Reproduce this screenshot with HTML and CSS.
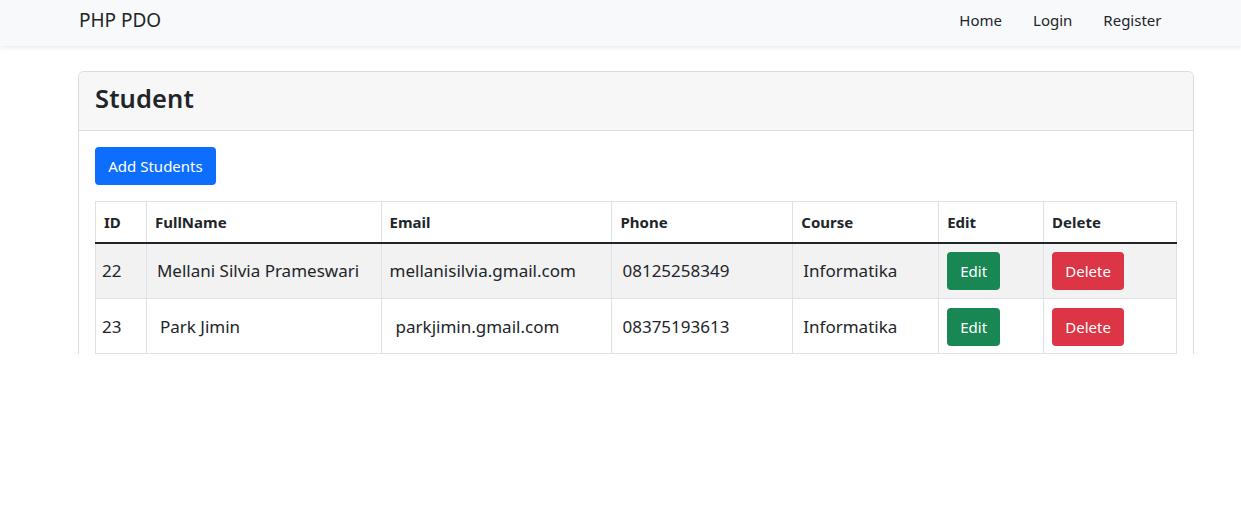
FILE: index.html
```html
<!DOCTYPE html>
<html lang="en">
<head>
<meta charset="utf-8">
<title>PHP PDO</title>
<link rel="stylesheet" href="styles.css">
</head>
<body>
<nav class="navbar">
  <a class="brand" href="#">PHP PDO</a>
  <ul class="nav">
    <li><a href="#">Home</a></li>
    <li><a href="#">Login</a></li>
    <li><a href="#">Register</a></li>
  </ul>
</nav>
<main class="container">
  <section class="card">
    <header class="card-header"><h3>Student</h3></header>
    <div class="card-body">
      <a class="btn btn-primary add" href="#">Add Students</a>
      <table class="table">
        <thead>
          <tr>
            <th class="c-id">ID</th>
            <th class="c-name">FullName</th>
            <th class="c-email">Email</th>
            <th class="c-phone">Phone</th>
            <th class="c-course">Course</th>
            <th class="c-edit">Edit</th>
            <th class="c-del">Delete</th>
          </tr>
        </thead>
        <tbody>
          <tr class="striped">
            <td>22</td>
            <td>Mellani Silvia Prameswari</td>
            <td>mellanisilvia.gmail.com</td>
            <td>08125258349</td>
            <td>Informatika</td>
            <td><a class="btn btn-success" href="#">Edit</a></td>
            <td><a class="btn btn-danger" href="#">Delete</a></td>
          </tr>
          <tr>
            <td>23</td>
            <td class="lead-space">Park Jimin</td>
            <td class="lead-space2">parkjimin.gmail.com</td>
            <td>08375193613</td>
            <td>Informatika</td>
            <td><a class="btn btn-success" href="#">Edit</a></td>
            <td><a class="btn btn-danger" href="#">Delete</a></td>
          </tr>
        </tbody>
      </table>
    </div>
  </section>
</main>
</body>
</html>
```
FILE: styles.css
```css
* { box-sizing: border-box; }
html, body { margin: 0; padding: 0; }
body {
  font-family: "Noto Sans", "Open Sans", sans-serif;
  color: #212529;
  background: #fff;
  font-size: 16px;
}
a { text-decoration: none; }

.navbar {
  height: 46px;
  background: #f8f9fa;
  box-shadow: 0 2px 4px rgba(0,0,0,0.08);
  display: flex;
  align-items: center;
  justify-content: space-between;
  padding: 0 64px 0 79px;
}
.brand {
  color: #212529;
  font-size: 19px;
  margin-top: -6px;
}
.nav {
  list-style: none;
  margin: -7px 0 0;
  padding: 0;
  display: flex;
  gap: 0;
}
.nav a {
  display: block;
  color: #212529;
  font-size: 15px;
  padding: 8px 15.5px;
}

.container {
  padding: 25px 47px 0 78px;
}
.card {
  border: 1px solid #dcdcdc;
  border-bottom: none;
  border-radius: 6px 6px 0 0;
}
.card-header {
  height: 59px;
  background: #f7f7f7;
  border-bottom: 1px solid #dcdcdc;
  border-radius: 5px 5px 0 0;
  padding: 0 16px 6px;
  display: flex;
  align-items: center;
}
.card-header h3 {
  margin: 0;
  font-size: 25.5px;
  font-weight: 600;
  letter-spacing: 0.1px;
}
.card-body {
  padding: 16px 16px 0;
}
.btn {
  display: inline-flex;
  align-items: center;
  justify-content: center;
  height: 38px;
  border-radius: 4px;
  color: #fff;
  font-size: 15px;
  padding: 0 12px;
}
.btn-primary { background: #0d6efd; }
.btn-success { background: #198754; width: 53px; padding: 0; }
.btn-danger { background: #dc3545; width: 72px; padding: 0; }
.add { width: 121px; padding: 0; }

.table {
  margin-top: 16px;
  width: 1082px;
  border-collapse: collapse;
  border: 1px solid #dee2e6;
  border-bottom: none;
}
.table th, .table td {
  border: 1px solid #dee2e6;
  text-align: left;
  vertical-align: middle;
  padding: 0 8px;
}
.table th {
  height: 41px;
  font-size: 15px;
  font-weight: 700;
  border-bottom: 2px solid #212529;
}
.table td {
  height: 55px;
  font-size: 17px;
}
.table tbody tr:first-child td { height: 56px; }
.striped td { background: #f2f2f2; }
.table td:first-child { padding-left: 6px; }
.table td:nth-child(2) { padding-left: 10px; }
.table td:nth-child(3) { padding-left: 8px; }
.table td:nth-child(4) { padding-left: 10px; }
.table td:nth-child(5) { padding-left: 10px; }
.table td:nth-child(6), .table td:nth-child(7) { padding-left: 8px; padding-top: 1px; }
.lead-space { padding-left: 13px !important; }
.lead-space2 { padding-left: 14px !important; }

.c-id { width: 51px; }
.c-name { width: 235px; }
.c-email { width: 231px; }
.c-phone { width: 181px; }
.c-course { width: 146px; }
.c-edit { width: 105px; }
.c-del { width: 133px; }
```
